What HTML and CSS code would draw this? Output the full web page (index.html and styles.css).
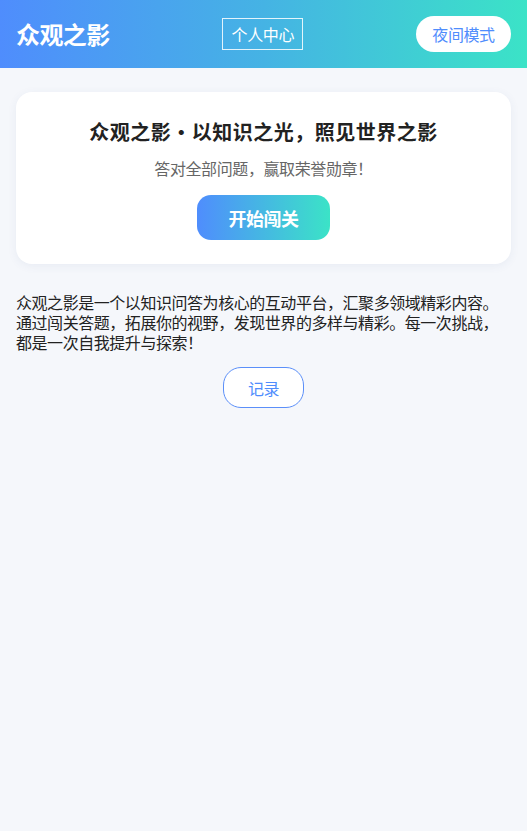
FILE: index.html
```html
<!DOCTYPE html>
<html lang="zh-CN">
<head>
<meta charset="utf-8">
<title>众观之影</title>
<link rel="stylesheet" href="styles.css">
</head>
<body>
<header class="topbar">
  <div class="brand">众观之影</div>
  <a class="profile-btn">个人中心</a>
  <button class="night-btn">夜间模式</button>
</header>
<main class="content">
  <section class="card">
    <h1 class="card-title">众观之影·以知识之光，照见世界之影</h1>
    <p class="card-sub">答对全部问题，赢取荣誉勋章！</p>
    <button class="start-btn">开始闯关</button>
  </section>
  <p class="intro">众观之影是一个以知识问答为核心的互动平台，汇聚多领域精彩内容。通过闯关答题，拓展你的视野，发现世界的多样与精彩。每一次挑战，都是一次自我提升与探索！</p>
  <div class="record-row"><button class="record-btn">记录</button></div>
</main>
</body>
</html>
```
FILE: styles.css
```css
* { box-sizing: border-box; }
html, body { margin: 0; padding: 0; }
body {
  background: #f5f7fb;
  font-family: "Noto Sans CJK SC", "Noto Sans", sans-serif;
  color: #222;
  width: 527px;
  min-height: 831px;
}
.topbar {
  height: 68px;
  background: linear-gradient(90deg, #4f8dfd 0%, #45b3e4 50%, #3be3c7 100%);
  display: flex;
  align-items: center;
  justify-content: space-between;
  padding: 0 16px;
}
.brand {
  color: #fff;
  font-size: 24px;
  font-weight: 700;
  line-height: 1;
  letter-spacing: -0.6px;
}
.profile-btn {
  color: #fff;
  font-size: 16px;
  line-height: 1;
  border: 1px solid rgba(255,255,255,0.85);
  width: 81px;
  height: 32px;
  display: flex;
  align-items: center;
  justify-content: center;
  letter-spacing: -0.4px;
}
.night-btn {
  background: #fff;
  color: #4f8dfd;
  border: none;
  border-radius: 18px;
  font-family: inherit;
  font-size: 16px;
  line-height: 1;
  width: 95px;
  height: 36px;
  padding: 0;
  letter-spacing: -0.4px;
}
.content {
  padding: 24px 16px;
}
.card {
  background: #fff;
  border-radius: 16px;
  box-shadow: 0 2px 10px rgba(60,80,140,0.07);
  padding: 26px 16px 24px;
  display: flex;
  flex-direction: column;
  align-items: center;
}
.card-title {
  margin: 0;
  font-size: 20px;
  line-height: 28px;
  font-weight: 700;
  color: #222;
  letter-spacing: 0.5px;
}
.card-sub {
  margin: 11px 0 0;
  font-size: 16px;
  line-height: 22px;
  color: #666;
  letter-spacing: -0.4px;
}
.start-btn {
  margin-top: 16px;
  width: 133px;
  height: 45px;
  border: none;
  border-radius: 14px;
  background: linear-gradient(90deg, #4f8dfd, #3be3c7);
  color: #fff;
  font-family: inherit;
  font-size: 18px;
  font-weight: 700;
  letter-spacing: -0.5px;
}
.intro {
  margin: 28px 0 0;
  font-size: 16px;
  line-height: 20px;
  color: #222;
  letter-spacing: -0.45px;
}
.record-row {
  display: flex;
  justify-content: center;
  margin-top: 15px;
}
.record-btn {
  width: 81px;
  height: 41px;
  border: 1px solid #5b8ff9;
  border-radius: 18px;
  background: #fff;
  color: #4f8dfd;
  font-family: inherit;
  font-size: 16px;
  letter-spacing: -0.4px;
}
```
